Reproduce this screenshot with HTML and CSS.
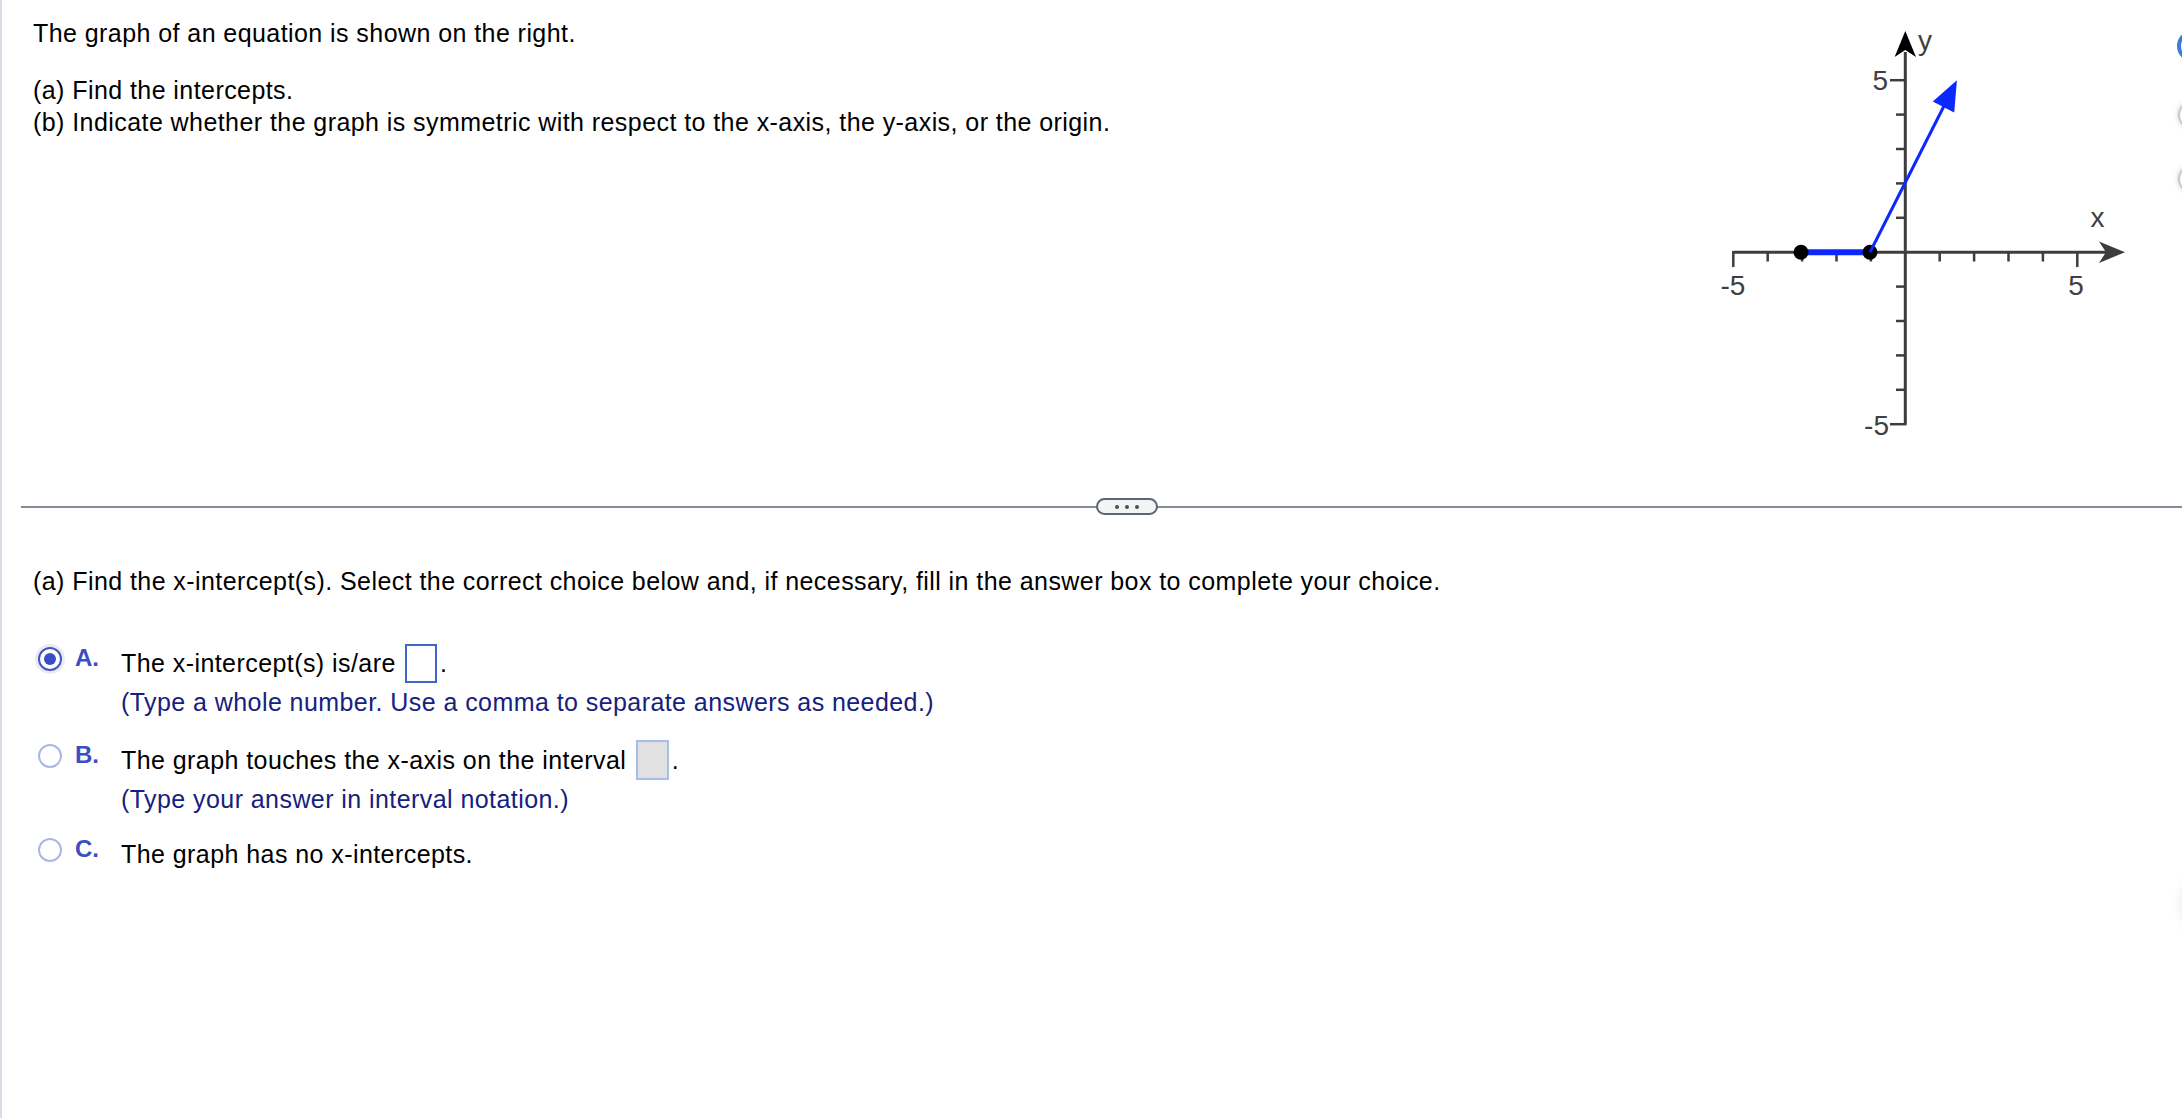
FILE: index.html
```
<!DOCTYPE html>
<html>
<head>
<meta charset="utf-8">
<title>Graph intercepts</title>
<link rel="stylesheet" href="styles.css">
</head>
<body>
<div class="page">
  <section class="top">
    <div class="intro">
      <p class="p1">The graph of an equation is shown on the right.</p>
      <p class="p2">(a) Find the intercepts.<br>(b) Indicate whether the graph is symmetric with respect to the x-axis, the y-axis, or the origin.</p>
    </div>
    <svg class="graph" width="420" height="440" viewBox="0 0 420 440" xmlns="http://www.w3.org/2000/svg">
      <g stroke="#3d3d3d" fill="none">
        <line x1="18.3" y1="232.2" x2="392" y2="232.2" stroke-width="3"/>
        <line x1="190.3" y1="404.2" x2="190.3" y2="32" stroke-width="3"/>
        <g stroke-width="2.5">
          <line x1="18.3" y1="231" x2="18.3" y2="247"/>
          <line x1="52.7" y1="232" x2="52.7" y2="241.5"/>
          <line x1="87.1" y1="232" x2="87.1" y2="241.5"/>
          <line x1="121.5" y1="232" x2="121.5" y2="241.5"/>
          <line x1="155.9" y1="232" x2="155.9" y2="241.5"/>
          <line x1="224.7" y1="232" x2="224.7" y2="241.5"/>
          <line x1="259.1" y1="232" x2="259.1" y2="241.5"/>
          <line x1="293.5" y1="232" x2="293.5" y2="241.5"/>
          <line x1="327.9" y1="232" x2="327.9" y2="241.5"/>
          <line x1="362.3" y1="232" x2="362.3" y2="247"/>
          <line x1="191.5" y1="60.2" x2="175" y2="60.2"/>
          <line x1="190.3" y1="94.6" x2="181" y2="94.6"/>
          <line x1="190.3" y1="129" x2="181" y2="129"/>
          <line x1="190.3" y1="163.4" x2="181" y2="163.4"/>
          <line x1="190.3" y1="197.8" x2="181" y2="197.8"/>
          <line x1="190.3" y1="266.6" x2="181" y2="266.6"/>
          <line x1="190.3" y1="301" x2="181" y2="301"/>
          <line x1="190.3" y1="335.4" x2="181" y2="335.4"/>
          <line x1="190.3" y1="369.8" x2="181" y2="369.8"/>
          <line x1="191.5" y1="404.2" x2="175" y2="404.2"/>
        </g>
      </g>
      <path d="M410 232.2 L384 221.5 L391 232.2 L384 242.9 Z" fill="#3d3d3d"/>
      <path d="M190.3 11 L179.6 37 L190.3 30 L201 37 Z" fill="#000"/>
      <g class="lbl" fill="#404040">
        <text x="173" y="70" text-anchor="end">5</text>
        <text x="174" y="415" text-anchor="end">-5</text>
        <text x="18" y="275" text-anchor="middle">-5</text>
        <text x="361" y="275" text-anchor="middle">5</text>
        <text x="382.5" y="207" text-anchor="middle">x</text>
        <text x="203" y="30">y</text>
      </g>
      <line x1="87.1" y1="232.2" x2="155.9" y2="232.2" stroke="#0a28ff" stroke-width="6"/>
      <circle cx="86" cy="232.2" r="7.5" fill="#000"/>
      <circle cx="155" cy="232.2" r="7.5" fill="#000"/>
      <line x1="155" y1="232.2" x2="229" y2="86" stroke="#0a28ff" stroke-width="3"/>
      <path d="M241.9 60.2 L239.2 92.4 L217.8 81.6 Z" fill="#0a28ff"/>
    </svg>
  </section>

  <div class="divider"><span class="pill"><i></i><i></i><i></i></span></div>

  <section class="part">
    <p class="prompt">(a) Find the x-intercept(s). Select the correct choice below and, if necessary, fill in the answer box to complete your choice.</p>
    <div class="options">
      <div class="option opt-a">
        <span class="radio checked"></span>
        <span class="letter">A.</span>
        <div class="body">
          <div class="line">The x-intercept(s) is/are <span class="box active"></span>.</div>
          <div class="hint">(Type a whole number. Use a comma to separate answers as needed.)</div>
        </div>
      </div>
      <div class="option opt-b">
        <span class="radio"></span>
        <span class="letter">B.</span>
        <div class="body">
          <div class="line">The graph touches the x-axis on the interval <span class="box idle"></span>.</div>
          <div class="hint">(Type your answer in interval notation.)</div>
        </div>
      </div>
      <div class="option opt-c">
        <span class="radio"></span>
        <span class="letter">C.</span>
        <div class="body">
          <div class="line">The graph has no x-intercepts.</div>
        </div>
      </div>
    </div>
  </section>

  <span class="edge-btn e1"></span>
  <span class="edge-btn e2"></span>
  <span class="edge-btn e3"></span>
  <span class="edge-btn e4"></span>
</div>
</body>
</html>
```

FILE: styles.css
```
html, body {
  margin: 0;
  padding: 0;
  background: #ffffff;
}

body {
  font-family: "Liberation Sans", Arial, Helvetica, sans-serif;
  font-size: 25px;
  letter-spacing: 0.43px;
  color: #000;
}

.page {
  position: relative;
  min-height: 1118px;
  border-left: 2px solid #d8dce6;
  box-sizing: border-box;
  overflow: hidden;
}

p {
  margin: 0;
}

.top {
  height: 506px;
  display: flex;
  justify-content: space-between;
  align-items: flex-start;
  box-sizing: border-box;
}

.intro {
  padding: 17px 0 0 31px;
  line-height: 32px;
}

.p2 {
  margin-top: 25px;
}

.graph {
  display: block;
  margin: 20px 47px 0 0;
}

.lbl text {
  font-family: "Liberation Sans", Arial, sans-serif;
  font-size: 28px;
  letter-spacing: 0;
}

.divider {
  position: relative;
  height: 2px;
  margin-left: 19px;
  background: #848b99;
}

.pill {
  position: absolute;
  left: 1075px;
  top: -8px;
  width: 62px;
  height: 17px;
  box-sizing: border-box;
  border: 2px solid #5c6676;
  border-radius: 9px;
  background: #f3f4f6;
  display: flex;
  justify-content: center;
  align-items: center;
  gap: 6px;
}

.pill i {
  width: 4px;
  height: 4px;
  border-radius: 50%;
  background: #4a4f58;
}

.part {
  padding-left: 31px;
}

.prompt {
  margin-top: 57px;
  line-height: 32px;
}

.options {
  margin-top: 47px;
  display: flex;
  flex-direction: column;
  gap: 19px;
}

.option {
  display: flex;
  align-items: flex-start;
  margin-left: 5px;
  line-height: 39px;
}

.opt-c {
  margin-top: -3px;
}

.radio {
  flex: none;
  width: 24px;
  height: 24px;
  margin-top: 3px;
  margin-right: 13px;
  box-sizing: border-box;
  border: 2px solid #a9b7e6;
  border-radius: 50%;
  background: #fff;
  position: relative;
}

.radio.checked {
  border-color: #4556c4;
  box-shadow: 0 0 0 3px #e8ebf7;
}

.radio.checked::after {
  content: "";
  position: absolute;
  left: 4px;
  top: 4px;
  width: 12px;
  height: 12px;
  border-radius: 50%;
  background: #3a4fc6;
}

.letter {
  flex: none;
  width: 46px;
  font-size: 24px;
  font-weight: bold;
  letter-spacing: 0;
  line-height: 27px;
  color: #3b4fbe;
}

.hint {
  color: #16217e;
}

.box {
  display: inline-block;
  vertical-align: middle;
  box-sizing: border-box;
  width: 32px;
  height: 39px;
  margin: -4px 3px 0 2px;
}

.box.active {
  border: 2px solid #3f66c8;
  background: #fff;
}

.box.idle {
  width: 33px;
  height: 40px;
  border: 2px solid #a8bce9;
  background: #e1e1e1;
}

.edge-btn {
  position: absolute;
  border-radius: 50%;
  box-sizing: border-box;
}

.e1 {
  left: 2175px;
  top: 30px;
  width: 32px;
  height: 32px;
  border: 4px solid #3a7fd0;
}

.e2 {
  left: 2176px;
  top: 101px;
  width: 28px;
  height: 28px;
  border: 2px solid #c8c8c8;
  box-shadow: 0 0 5px rgba(0, 0, 0, 0.2);
}

.e3 {
  left: 2176px;
  top: 165px;
  width: 28px;
  height: 28px;
  border: 2px solid #c8c8c8;
  box-shadow: 0 0 5px rgba(0, 0, 0, 0.2);
}

.e4 {
  left: 2186px;
  top: 872px;
  width: 60px;
  height: 64px;
  background: #fff;
  box-shadow: 0 0 16px rgba(0, 0, 0, 0.25);
}
```
